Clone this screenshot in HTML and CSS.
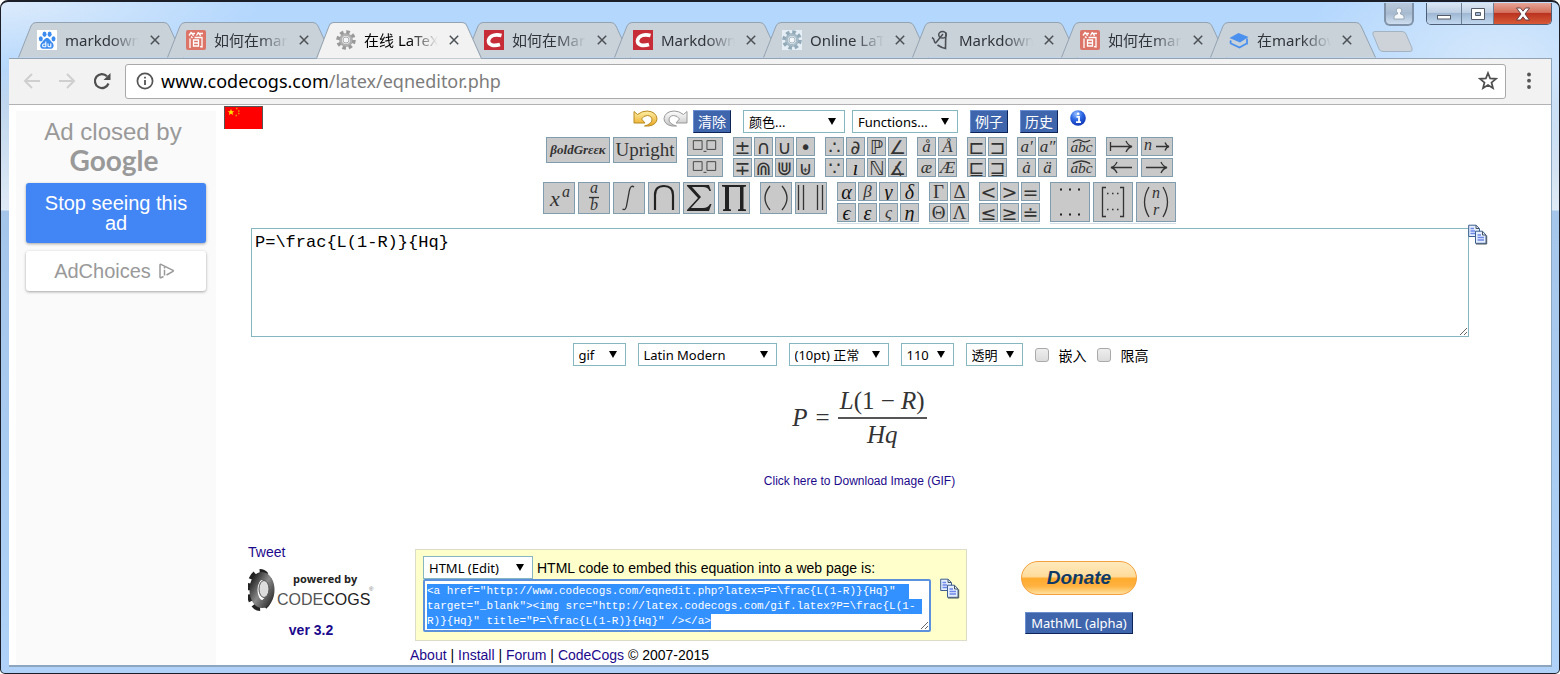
FILE: index.html
```html
<!DOCTYPE html>
<html lang="zh-CN">
<head>
<meta charset="utf-8">
<title>在线 LaTeX 公式编辑器</title>
<link rel="stylesheet" href="styles.css">
</head>
<body>
<svg class="defs" aria-hidden="true">
  <defs>
    <linearGradient id="gold" x1="0" y1="0" x2="0" y2="1"><stop offset="0" stop-color="#fff0a8"/><stop offset="1" stop-color="#e9a820"/></linearGradient>
    <linearGradient id="silver" x1="0" y1="0" x2="0" y2="1"><stop offset="0" stop-color="#ffffff"/><stop offset="1" stop-color="#c4c4c4"/></linearGradient>
    <radialGradient id="info" cx=".4" cy=".25" r=".8"><stop offset="0" stop-color="#9cc3ff"/><stop offset=".45" stop-color="#2f6be6"/><stop offset="1" stop-color="#0b2fae"/></radialGradient>
    <linearGradient id="metal" x1="0" y1="0" x2="1" y2="1"><stop offset="0" stop-color="#222"/><stop offset=".5" stop-color="#8a8a8a"/><stop offset="1" stop-color="#333"/></linearGradient>
    <symbol id="tab" viewBox="0 0 166 36" preserveAspectRatio="none"><path d="M.5 35.500 L13 4 Q14.500.500 18 .500 H146 Q149.500.500 151 4 L165.500 35.500"/></symbol>
    <symbol id="x" viewBox="0 0 10 10"><path d="M.8.8 9.200 9.200M9.200.8.8 9.200" stroke="#4c5155" stroke-width="1.500" fill="none"/></symbol>
    <symbol id="jian" viewBox="0 0 20 20"><rect width="20" height="20" rx="2" fill="#dd7468"/><path d="M5.500 2 3 5.500M4.500 3.500H9M6.500 4l1 2M12.500 2l-2 3.500M11.500 3.500H17M13.500 4l1 2M4 8.500V18M5 6.500l1.500 1.500M8.500 7.500H16V17l-2-.3M7.500 10h5v6h-5zM7.500 13h5" fill="none" stroke="#fff" stroke-width="1.300"/></symbol>
    <symbol id="csdn" viewBox="0 0 20 20"><rect width="20" height="20" fill="#c62d36"/><path d="M17.500 5.500C12 4 5.500 5 4.500 10.500 4 15 9.500 16.500 16 14.500" fill="none" stroke="#fff" stroke-width="3.600"/></symbol>
    <symbol id="cog" viewBox="0 0 20 20"><circle cx="10" cy="10" r="8" fill="none" stroke="currentColor" stroke-width="3.500" stroke-dasharray="3.500 2.783"/><circle cx="10" cy="10" r="5.500" fill="none" stroke="currentColor" stroke-width="3" opacity=".75"/><circle cx="10" cy="10" r="3" fill="#f4f6f7" stroke="currentColor" stroke-width=".8"/></symbol>
    <symbol id="copy" viewBox="0 0 20 20"><g stroke="#3d5f8f" fill="#e5efff"><path d="M.7.700H8L11.500 4V12H.7z"/><path d="M7.500 6.700H14.500L18 10.500V18.800H7.500z"/></g><path d="M18.700 11V19.500H8M14.500 7v3.500H18M8 1v3h3" fill="none" stroke="#46535f"/><path d="M2.500 4H6M2.500 6.500H7M2.500 9H7M9.500 10.500H13M9.500 13H16M9.500 15.500H16" stroke="#6d87e8" stroke-width="1.300"/></symbol>
    <symbol id="boxes" viewBox="0 0 35 17"><path d="M5.500 2.500h9v9h-9zM19.500 2.500h9v9h-9zM16 13.500h3" fill="none" stroke="#444"/></symbol>
  </defs>
</svg>

<div class="window">
  <header class="titlebar">
    <nav class="tabs" aria-label="标签页">
      <div class="tab"><svg class="shape"><use href="#tab"/></svg>
        <svg class="fav" viewBox="0 0 20 20"><rect width="20" height="20" fill="#fff"/><g fill="#3c8cf0"><ellipse cx="3.800" cy="8.800" rx="2" ry="2.600"/><ellipse cx="7.500" cy="4.200" rx="2" ry="2.700"/><ellipse cx="12.600" cy="4.200" rx="2" ry="2.700"/><ellipse cx="16.500" cy="8.800" rx="2" ry="2.600"/><path d="M10 8c2.500 0 3 2.500 5 4.200 3 2.600 1.500 6.600-1.500 6.600h-7c-3.300 0-4.600-4-1.500-6.600C7 10.500 7.500 8 10 8z"/></g><path d="M8.800 11.500v5.300M8.800 14h-2q-1.200 0-1.200 1.400t1.200 1.400h2M11 13.500v2.200q0 1.100 1.200 1.100h1.600v-3.300" fill="none" stroke="#fff" stroke-width="1.100"/></svg>
        <span class="title">markdown</span><button class="close" aria-label="关闭"><svg><use href="#x"/></svg></button></div>
      <div class="tab"><svg class="shape"><use href="#tab"/></svg><svg class="fav"><use href="#jian"/></svg><span class="title">如何在markdown</span><button class="close" aria-label="关闭"><svg><use href="#x"/></svg></button></div>
      <div class="tab active"><svg class="shape"><use href="#tab"/></svg><svg class="fav gray"><use href="#cog"/></svg><span class="title">在线 LaTeX</span><button class="close" aria-label="关闭"><svg><use href="#x"/></svg></button></div>
      <div class="tab"><svg class="shape"><use href="#tab"/></svg><svg class="fav"><use href="#csdn"/></svg><span class="title">如何在Markdown</span><button class="close" aria-label="关闭"><svg><use href="#x"/></svg></button></div>
      <div class="tab"><svg class="shape"><use href="#tab"/></svg><svg class="fav"><use href="#csdn"/></svg><span class="title">Markdown</span><button class="close" aria-label="关闭"><svg><use href="#x"/></svg></button></div>
      <div class="tab"><svg class="shape"><use href="#tab"/></svg><svg class="fav steel"><use href="#cog"/></svg><span class="title">Online LaTeX</span><button class="close" aria-label="关闭"><svg><use href="#x"/></svg></button></div>
      <div class="tab"><svg class="shape"><use href="#tab"/></svg>
        <svg class="fav" viewBox="0 0 20 20"><path d="M1 7.500q2 1 2.500 4 .5 2.500 2 .5L12 4" fill="none" stroke="#4b5055" stroke-width="1.500"/><ellipse cx="11.500" cy="4.800" rx="3.800" ry="3.300" fill="none" stroke="#4b5055" stroke-width="1.500"/><path d="M15 2.500q-.5 8-.5 16-3.500-.5-8-3.500" fill="none" stroke="#4b5055" stroke-width="1.600"/></svg>
        <span class="title">Markdown</span><button class="close" aria-label="关闭"><svg><use href="#x"/></svg></button></div>
      <div class="tab"><svg class="shape"><use href="#tab"/></svg><svg class="fav"><use href="#jian"/></svg><span class="title">如何在markdown</span><button class="close" aria-label="关闭"><svg><use href="#x"/></svg></button></div>
      <div class="tab"><svg class="shape"><use href="#tab"/></svg>
        <svg class="fav" viewBox="0 0 20 20"><path d="M.5 8 9.500 3 19.500 7 11 12.500z" fill="#4a90ee"/><path d="M2 10.500q-1 2 0 3l8.500 4 8-4.500M18 8.500v6" fill="none" stroke="#4a90ee" stroke-width="1.800"/></svg>
        <span class="title">在markdown</span><button class="close" aria-label="关闭"><svg><use href="#x"/></svg></button></div>
      <button class="newtab" aria-label="新标签页"><svg viewBox="0 0 42 21"><path d="M3 .5H30Q33 .5 34 3L40 17Q41 20.500 38 20.500H11Q8 20.500 7 18L1 3.500Q0 .5 3 .5z" fill="#cdd3d9" stroke="#a3b3c2"/></svg></button>
    </nav>
    <button class="user" aria-label="用户"><svg viewBox="0 0 12 13"><path d="M6 1a2.600 2.600 0 0 1 1.500 4.800V7Q11 7.500 11 10v2H1v-2q0-2.500 3.500-3V5.800A2.600 2.600 0 0 1 6 1z" fill="#f6f9fc" stroke="#8b9aa8" stroke-width=".8"/></svg></button>
    <div class="controls">
      <button class="ctl min" aria-label="最小化"><svg viewBox="0 0 18 14"><rect x="2.500" y="8.500" width="13" height="3.500" fill="#fff" stroke="#525b66"/></svg></button>
      <button class="ctl max" aria-label="最大化"><svg viewBox="0 0 18 14"><path d="M2.500 1.500h13v11h-13zM6.500 5.500h5v3h-5z" fill="#fff" fill-rule="evenodd" stroke="#525b66"/></svg></button>
      <button class="ctl quit" aria-label="关闭窗口"><svg viewBox="0 0 18 14"><path d="M2.500 1h4L9 4.200 11.500 1h4L11 7l4.500 6h-4L9 9.800 6.500 13h-4L7 7z" fill="#fff" stroke="#5a3a44" stroke-width=".9"/></svg></button>
    </div>
  </header>

  <div class="client">
    <div class="toolbar">
      <button class="nav off" aria-label="后退"><svg viewBox="0 0 18 18"><path d="M17 9H2M9 2 2 9l7 7"/></svg></button>
      <button class="nav off" aria-label="前进"><svg viewBox="0 0 18 18"><path d="M1 9h15M9 2l7 7-7 7"/></svg></button>
      <button class="nav reload" aria-label="刷新"><svg viewBox="0 0 18 18"><path d="M15.500 11.500A7 7 0 1 1 14 4.200" stroke-width="2.200"/><path d="M17.500 1v7h-7z" fill="#4f4f4f" stroke="none"/></svg></button>
      <div class="omnibox">
        <svg class="site" viewBox="0 0 18 18"><circle cx="9" cy="9" r="7.600" fill="none" stroke="#555" stroke-width="1.700"/><path d="M9 8v5M9 4.800v1.800" stroke="#555" stroke-width="1.800"/></svg>
        <div class="url" role="textbox" aria-label="地址">www.codecogs.com<span>/latex/eqneditor.php</span></div>
        <svg class="star" viewBox="0 0 20 20"><path d="M10 2l2.100 5.400 5.900.4-4.500 3.700 1.500 5.700-5-3.200-5 3.200 1.500-5.700L2 7.800l5.900-.4z" fill="none" stroke="#4f4f4f" stroke-width="1.700"/></svg>
      </div>
      <button class="menu" aria-label="菜单"><svg viewBox="0 0 6 18"><g fill="#555"><circle cx="3" cy="2.500" r="1.900"/><circle cx="3" cy="8.700" r="1.900"/><circle cx="3" cy="15" r="1.900"/></g></svg></button>
    </div>

    <div class="page">
      <aside class="ad">
        <p class="closed">Ad closed by</p>
        <p class="google">Google</p>
        <button class="stop">Stop seeing this ad</button>
        <button class="choices">AdChoices <svg viewBox="0 0 16 16"><path d="M4.500 13.500l-2.500 1.200q-1 .3-1-.7V2q0-1 1-.6L14 7.300q.8.500 0 1L7.500 12M5.500 6.800v5.700M5.500 4v1.600" fill="none" stroke="#999" stroke-width="1.500"/></svg></button>
      </aside>

      <main class="editor">
        <div class="top">
          <svg class="flag" viewBox="0 0 39 23"><path d="M0 0h39v23H0z" fill="#fe0000"/><path d="M.5 23V.5h38V23" fill="none" stroke="#555"/><path d="M7 3l1 2.200 2.300.1-1.800 1.500.7 2.200L7 7.700 4.800 9l.7-2.200-1.800-1.500L6 5.200z" fill="#fd0"/><path d="M12 2.500h1.500M14 5h1.500M14 7.500h1.500M11.500 9.500H13" stroke="#e8920a" stroke-width="1.300"/></svg>
          <div class="actions">
            <button class="plain" aria-label="撤销"><svg viewBox="0 0 25 17"><path d="M1 1.500 4.500 4.500Q9 1 14 1q9 .5 10 7.500 0 6-8 7.500h-4.500q7-2 7.500-6 0-4-4.500-4.500-4 0-6 3.500l3.500 4H1z" fill="url(#gold)" stroke="#b98a1e"/></svg></button>
            <button class="plain" aria-label="重做"><svg viewBox="0 0 25 17"><path d="M24 1.500 20.500 4.500Q16 1 11 1 2 1.500 1 8.500 1 14.500 9 16h4.500Q6.500 14 6 10q0-4 4.500-4.500 4 0 6 3.500L13 13H24z" fill="url(#silver)" stroke="#999"/></svg></button>
            <button class="blue">清除</button>
            <select class="colour" aria-label="颜色"><option>颜色...</option></select>
            <select class="functions" aria-label="Functions"><option>Functions...</option></select>
            <button class="blue">例子</button>
            <button class="blue">历史</button>
            <button class="plain info" aria-label="帮助"><svg viewBox="0 0 16 16"><circle cx="8" cy="8" r="7.800" fill="url(#info)"/><path d="M6.500 6.800H9v5M6 12.200h5" fill="none" stroke="#fff" stroke-width="1.800"/><circle cx="8.200" cy="3.800" r="1.300" fill="#fff"/></svg></button>
          </div>
        </div>

        <div class="panels">
          <div class="group two"><button class="key wide greek">βoldGrεεκ</button><button class="key wide">Upright</button></div>
          <div class="group one"><button class="key mid"><svg><use href="#boxes"/></svg></button><button class="key mid"><svg><use href="#boxes"/></svg></button></div>
          <div class="group four sym"><button class="key">±</button><button class="key">∩</button><button class="key">∪</button><button class="key">•</button><button class="key">∓</button><button class="key">⋒</button><button class="key">⋓</button><button class="key">⊎</button></div>
          <div class="group four sym"><button class="key">∴</button><button class="key it">∂</button><button class="key">ℙ</button><button class="key">∠</button><button class="key">∵</button><button class="key gk">ı</button><button class="key">ℕ</button><button class="key">∡</button></div>
          <div class="group two"><button class="key it">å</button><button class="key it">Å</button><button class="key it">æ</button><button class="key it">Æ</button></div>
          <div class="group two sym"><button class="key">⊏</button><button class="key">⊐</button><button class="key">⊑</button><button class="key">⊒</button></div>
          <div class="group two"><button class="key it">a′</button><button class="key it">a″</button><button class="key it">ȧ</button><button class="key it">ä</button></div>
          <div class="group one"><button class="key abc"><svg viewBox="0 0 28 17"><path d="M5 4q5-4 9-1.500T23 2" class="line"/><text x="14" y="14">abc</text></svg></button><button class="key abc"><svg viewBox="0 0 28 17"><path d="M5 4.500Q14-1 23 4.500" class="line"/><text x="14" y="14">abc</text></svg></button></div>
          <div class="group two">
            <button class="key arrow"><svg viewBox="0 0 30 17"><path d="M3.500 4v9M4 8.500H25M19 3q2 4.500 6 5.500-4 1-6 5.500" class="line"/></svg></button>
            <button class="key arrow"><svg viewBox="0 0 30 17"><text x="6" y="12">n</text><path d="M14 8.500h13M23 4.500q1.500 3.500 4 4-2.500.5-4 4" class="line"/></svg></button>
            <button class="key arrow"><svg viewBox="0 0 30 17"><path d="M4 8.500H25M10 3Q8 7.500 4 8.500q4 1 6 5.500" class="line"/></svg></button>
            <button class="key arrow"><svg viewBox="0 0 30 17"><path d="M4 8.500H25M19 3q2 4.500 6 5.500-4 1-6 5.500" class="line"/></svg></button>
          </div>
        </div>

        <div class="panels last">
          <div class="group six">
            <button class="key big"><svg viewBox="0 0 30 30"><text x="11" y="23" class="t22">x</text><text x="22" y="14">a</text></svg></button>
            <button class="key big"><svg viewBox="0 0 30 30"><text x="15" y="10">a</text><path d="M10 14.500h10" class="line"/><text x="15" y="27">b</text></svg></button>
            <button class="key big"><svg viewBox="0 0 30 30"><path d="M20 4q-3-2.500-4.500 3l-3 16q-1 5-4 3" class="line"/></svg></button>
            <button class="key big"><svg viewBox="0 0 30 30"><path d="M6 27V12Q6 3 15 3t9 9v15" class="heavy"/></svg></button>
            <button class="key big"><svg viewBox="0 0 30 30"><path d="M3 2h22l2 6h-1.500Q24 4 19 4H8l9 10L7 25h12q5 0 7-4h1.500l-2.500 7H3v-1l11-12L3 3z" fill="#222"/></svg></button>
            <button class="key big"><svg viewBox="0 0 30 30"><path d="M3 2h24v1.500l-2.500.5v22l2.500.5V28h-8v-1.500l2-.5V4H10v22l2 .5V28H4v-1.500l2-.5V4l-3-.5z" fill="#222"/></svg></button>
          </div>
          <div class="group two">
            <button class="key big"><svg viewBox="0 0 30 30"><path d="M9 3q-10 12 0 24M21 3q10 12 0 24" class="line"/></svg></button>
            <button class="key big"><svg viewBox="0 0 30 30"><path d="M2.500 2v25M7.500 2v25M21.500 2v25M26.500 2v25" class="line"/></svg></button>
          </div>
          <div class="group four peek"><button class="key gk">α</button><button class="key it">β</button><button class="key gk">γ</button><button class="key gk">δ</button><button class="key gk">ϵ</button><button class="key gk">ε</button><button class="key it">ς</button><button class="key gk">η</button></div>
          <div class="group two peek up"><button class="key">Γ</button><button class="key">Δ</button><button class="key">Θ</button><button class="key">Λ</button></div>
          <div class="group three peek sym"><button class="key">&lt;</button><button class="key">&gt;</button><button class="key">=</button><button class="key">≤</button><button class="key">≥</button><button class="key">≐</button></div>
          <div class="group three peek">
            <button class="key huge"><svg viewBox="0 0 38 38"><path d="M9 6.500h2M18 6.500h2M27 6.500h2M9 31.500h2M18 31.500h2M27 31.500h2" stroke="#222" stroke-width="2"/></svg></button>
            <button class="key huge"><svg viewBox="0 0 38 38"><path d="M12 4.500H8.500v29H12M26 4.500h3.500v29H26M13 10.500h1.500M18 10.500h1.500M23 10.500h1.500M13 26.500h1.500M18 26.500h1.500M23 26.500h1.500" class="line"/></svg></button>
            <button class="key huge"><svg viewBox="0 0 38 38"><path d="M12 4Q3 19 12 34M26 4q9 15 0 30" class="line"/><text x="19" y="15">n</text><text x="19" y="32">r</text></svg></button>
          </div>
        </div>

        <div class="source">
          <textarea class="latex" aria-label="LaTeX" spellcheck="false">P=\frac{L(1-R)}{Hq}</textarea>
          <button class="plain copy" aria-label="复制"><svg><use href="#copy"/></svg></button>
        </div>

        <div class="options">
          <select class="w53" aria-label="格式"><option>gif</option></select>
          <select class="w139" aria-label="字体"><option>Latin Modern</option></select>
          <select class="w100" aria-label="字号"><option>(10pt) 正常</option></select>
          <select class="w53" aria-label="分辨率"><option>110</option></select>
          <select class="w57" aria-label="背景"><option>透明</option></select>
          <label><input type="checkbox">嵌入</label>
          <label><input type="checkbox">限高</label>
        </div>

        <div class="equation" role="img" aria-label="P = L(1-R)/Hq">
          <i>P</i><span>=</span>
          <span class="frac"><span class="num"><i>L</i>(1 − <i>R</i>)</span><span class="den"><i>Hq</i></span></span>
        </div>
        <a class="download" href="#">Click here to Download Image (GIF)</a>

        <footer class="bottom">
          <div class="brand">
            <a href="#">Tweet</a>
            <svg class="logo" viewBox="0 0 128 46">
              <ellipse cx="12" cy="22" rx="9.500" ry="17" fill="none" stroke="#222" stroke-width="8" stroke-dasharray="6.500 4"/>
              <ellipse cx="14" cy="22" rx="8.500" ry="14" fill="none" stroke="url(#metal)" stroke-width="8"/>
              <ellipse cx="16" cy="21" rx="5" ry="8.500" fill="#ddd" stroke="#555"/>
              <text x="45" y="15" class="pow">powered by</text>
              <text x="29" y="37" class="cogs"><tspan fill="#555">CODE</tspan><tspan>COGS</tspan></text>
              <text x="121" y="23" class="reg">®</text>
            </svg>
            <a class="ver" href="#">ver 3.2</a>
          </div>
          <div class="middle">
            <div class="embed">
              <div class="code">
                <div class="line1"><select id="kind" class="w110" aria-label="代码类型"><option>HTML (Edit)</option></select><label for="code">HTML code to embed this equation into a web page is:</label></div>
                <textarea id="code" spellcheck="false">&lt;a href="http://www.codecogs.com/eqnedit.php?latex=P=\frac{L(1-R)}{Hq}" target="_blank"&gt;&lt;img src="http://latex.codecogs.com/gif.latex?P=\frac{L(1-R)}{Hq}" title="P=\frac{L(1-R)}{Hq}" /&gt;&lt;/a&gt;</textarea>
              </div>
              <button class="plain copy" aria-label="复制代码"><svg><use href="#copy"/></svg></button>
            </div>
            <p class="links"><a href="#">About</a> | <a href="#">Install</a> | <a href="#">Forum</a> | <a href="#">CodeCogs</a> © 2007-2015</p>
          </div>
          <div class="right">
            <button class="donate">Donate</button>
            <button class="blue mathml">MathML (alpha)</button>
          </div>
        </footer>
      </main>
    </div>
  </div>
</div>
<script src="main.js"></script>
</body>
</html>
```
FILE: main.js
```js
// The embed code is focused and selected on load, ready to be copied.
const code = document.getElementById("code");
code.focus({ preventScroll: true });
code.select();
```
FILE: styles.css
```css
* { box-sizing: border-box; }
body {
  margin: 0;
  background: #fff;
  color: #000;
  font-family: "Liberation Sans", "Noto Sans CJK SC", sans-serif;
  font-size: 14px;
}
p { margin: 0; }
button { margin: 0; padding: 0; border: 0; background: none; font-family: inherit; color: inherit; }
button svg { display: block; }
a { color: #1c0a8c; text-decoration: none; }
.defs { position: absolute; width: 0; height: 0; }

.window {
  display: flex;
  flex-direction: column;
  min-height: 100vh;
  padding: 1px 7px 6px 8px;
  border: 1px solid #1b1e26;
  border-top-width: 2px;
  border-radius: 8px 8px 5px 5px;
  background:
    radial-gradient(ellipse 260px 70px at 0 0, #dcebfb, transparent),
    radial-gradient(ellipse 200px 120px at 96% 60px, #d5e8fb, transparent),
    linear-gradient(#b4d7fd 0, #b4d7fd 60px, #c0d6ee 100px, #dfeaf5 208px, #a5c5ea 209px, #b0d2f8 100%);
}

/* Title bar */
.titlebar { display: flex; height: 55px; }
.tabs { display: flex; align-items: flex-end; flex: 1; min-width: 0; padding-left: 9px; }
.tab {
  position: relative;
  display: flex;
  align-items: center;
  flex: none;
  width: 166px;
  height: 36px;
  margin-right: -17px;
  padding: 0 19px;
}
.tab .shape { position: absolute; inset: 0; width: 100%; height: 100%; fill: #c9d1d9; stroke: #94a3b1; }
.tab.active { z-index: 1; margin-bottom: -1px; height: 37px; padding-left: 20px; padding-bottom: 1px; }
.tab.active .shape { fill: #f2f2f2; }
.fav { position: relative; flex: none; width: 20px; height: 20px; }
.gray { color: #999; }
.steel { color: #91a9b8; background: #e5eef4; }
.title {
  position: relative;
  width: 74px;
  margin-left: 8px;
  overflow: hidden;
  white-space: nowrap;
  font-family: "Noto Sans", "Noto Sans CJK SC", sans-serif;
  font-size: 15px;
  line-height: 24px;
  color: #30353a;
  -webkit-mask-image: linear-gradient(90deg, #000 60%, transparent);
  mask-image: linear-gradient(90deg, #000 60%, transparent);
}
.active .title { color: #000; }
.close { position: relative; margin-left: 11px; }
.close svg { width: 10px; height: 10px; }
.newtab { flex: none; margin: 0 0 6px 13px; }
.newtab svg { width: 42px; height: 21px; }
.user {
  position: relative;
  display: grid;
  place-items: center;
  flex: none;
  width: 30px;
  height: 23px;
  margin-right: 12px;
  border: 2px solid #8093a8;
  border-top: 0;
  border-radius: 0 0 6px 6px;
  background: linear-gradient(#b9c9da, #a6bad0 50%, #cfdef0);
}
.user svg { width: 12px; height: 13px; }
.controls { display: flex; flex: none; height: 22px; border: 1px solid #4d5f76; border-top: 0; border-radius: 0 0 5px 5px; overflow: hidden; }
.ctl { display: grid; place-items: center; width: 35px; border-right: 1px solid #6d8096; background: linear-gradient(#dbe7f4, #bfd0e4 45%, #9fb7d2 50%, #c2d8f0); }
.ctl.max { width: 32px; }
.ctl.quit { width: 57px; border: 0; background: linear-gradient(#e5a597, #d3705c 45%, #bb3320 50%, #d75a37); }
.ctl svg { width: 18px; height: 14px; }

/* Browser toolbar */
.client { display: flex; flex-direction: column; flex: 1; border: 1px solid #8ca6c0; border-width: 0 1px 2px 0; background: #fff; }
.toolbar { display: flex; align-items: center; height: 47px; padding: 0 19px 1px 14px; border-top: 1px solid #94a3b1; border-bottom: 1px solid #b3b1b3; background: #f2f2f2; }
.nav { margin-right: 17px; }
.nav svg { width: 18px; height: 18px; fill: none; stroke: #4f4f4f; stroke-width: 2; }
.nav.off svg { stroke: #cfcfcf; }
.nav.reload { margin-right: 14px; }
.omnibox { display: flex; align-items: center; flex: 1; height: 35px; padding: 0 7px 0 10px; border: 1px solid #a9a9a9; border-radius: 3px; background: #fff; }
.site { width: 18px; height: 18px; }
.url { flex: 1; margin-left: 7px; font: 18px/24px "Noto Sans", "Open Sans", sans-serif; color: #000; }
.url span { color: #7c7c7c; }
.star { width: 20px; height: 20px; }
.menu { margin-left: 20px; }
.menu svg { width: 6px; height: 18px; }

/* Page */
.page { display: flex; flex: 1; padding: 1px 0 0 7px; }
.ad { width: 200px; margin-top: 5px; padding: 7px 10px; background: #fafafa; text-align: center; color: #999; }
.closed { font-size: 24px; line-height: 28px; padding-right: 6px; }
.google { font: 700 28px/28px Lato, sans-serif; color: #999; padding-right: 4px; margin-bottom: 9px; }
.stop, .choices { width: 100%; border-radius: 3px; box-shadow: 0 1px 3px rgba(0, 0, 0, .35); font-size: 20px; line-height: 20px; }
.stop { padding: 10px 16px; background: #4285f4; color: #fff; }
.choices { display: flex; align-items: center; justify-content: center; gap: 8px; height: 40px; margin-top: 8px; padding-right: 3px; background: #fff; }
.choices svg { width: 16px; height: 16px; }

.editor { flex: 1; padding: 0 56px 0 8px; }
.top { display: grid; grid-template-columns: 1fr auto 1fr; }
.flag { width: 39px; height: 23px; }
.actions { display: flex; align-items: flex-start; padding-top: 4px; height: 31px; }
.plain svg { width: 25px; height: 17px; }
.actions .plain { margin-right: 5px; }
.blue {
  height: 23px;
  padding: 0 4px;
  border: 1px solid;
  border-color: #6a8fd0 #0c2458 #0c2458 #6a8fd0;
  background: #3f66ad;
  color: #fff;
  font: 14px/20px "Noto Sans", "Noto Sans CJK SC", sans-serif;
}
.actions .blue { margin-right: 12px; }
.actions .info { margin: 0; }
.info svg { width: 16px; height: 16px; }
select {
  appearance: none;
  height: 23px;
  padding: 0 18px 0 5px;
  border: 1px solid #86b6bf;
  border-radius: 0;
  background: #fff url("data:image/svg+xml,%3Csvg xmlns='http://www.w3.org/2000/svg' width='8' height='7'%3E%3Cpath d='M0 0h8L4 7z'/%3E%3C/svg%3E") no-repeat right 8px center;
  color: #000;
  font: 13px/20px "Noto Sans", "Noto Sans CJK SC", sans-serif;
}
.colour { width: 102px; margin-right: 7px; }
.functions { width: 106px; margin-right: 12px; }

/* Symbol panels */
.panels { display: flex; justify-content: center; align-items: flex-start; gap: 10px; height: 45px; }
.panels.last { height: 46px; }
.group { display: grid; gap: 2px; }
.two { grid-template-columns: repeat(2, auto); }
.three { grid-template-columns: repeat(3, auto); }
.four { grid-template-columns: repeat(4, auto); }
.six { grid-template-columns: repeat(6, auto); }
.key {
  display: grid;
  place-items: center;
  width: 19px;
  height: 19px;
  border: 1px solid #809db0;
  background: #c9c9c9;
  color: #333;
  font: 17px/16px "Liberation Serif", "DejaVu Serif", serif;
  overflow: hidden;
}
.sym .key { font: 19px/16px "DejaVu Sans", sans-serif; }
.group .it { font-style: italic; }
.group .gk { font: italic 20px/16px "Liberation Serif", "DejaVu Serif", serif; color: #111; }
.up .key { font-size: 19px; }
.group .wide { width: 64px; height: 26px; font-size: 19px; line-height: 22px; }
.group .greek { font: italic 700 13px/22px "Liberation Serif", serif; }
.mid { width: 36px; }
.mid svg { width: 34px; height: 17px; }
.abc { width: 29px; }
.abc svg { width: 27px; height: 17px; }
.arrow { width: 32px; }
.arrow svg { width: 30px; height: 17px; }
.big { width: 32px; height: 32px; }
.big svg { width: 30px; height: 30px; }
.huge { width: 40px; height: 40px; }
.huge svg { width: 38px; height: 38px; }
.group:has(.big, .huge, .wide, .arrow) { column-gap: 3px; }
.peek { padding-bottom: 1px; border-bottom: 1px solid #d3dee6; }
.line { fill: none; stroke: #333; stroke-width: 1.3; }
.heavy { fill: none; stroke: #222; stroke-width: 2.2; }
.key text { fill: #333; font: italic 16px "Liberation Serif", serif; text-anchor: middle; }
.key .t22 { font-size: 22px; }

/* LaTeX source */
.source { display: flex; align-items: flex-start; padding-left: 27px; margin-right: -1px; }
.latex {
  flex: 1;
  height: 109px;
  margin: 0;
  padding: 2px 3px;
  border: 1px solid #86b6bf;
  outline: 0;
  font: 17px/24px "Liberation Mono", monospace;
}
.source .copy { width: 28px; margin: -4px 0 0 -1px; }
.copy svg { width: 20px; height: 21px; }

.options { display: flex; justify-content: center; align-items: center; gap: 12px; margin-top: 6px; }
.options label { display: flex; align-items: center; margin-right: -2px; }
.options input { width: 14px; height: 14px; margin: 0 10px 0 0; appearance: none; border: 1px solid #a9a9a9; border-radius: 3px; background: linear-gradient(#eee, #dcdcdc); }
.w53 { width: 53px; }
.w57 { width: 57px; }
.w100 { width: 100px; }
.w110 { width: 110px; }
.w139 { width: 139px; }

.equation { display: flex; justify-content: center; align-items: center; gap: 8px; height: 62px; margin-top: 21px; font: 25px/28px "Liberation Serif", serif; color: #333; }
.frac { display: grid; text-align: center; }
.num { padding: 0 2px 2px; border-bottom: 2px solid #555; }
.den { padding-top: 2px; }
.download { display: block; margin-top: 24px; text-align: center; font-size: 12px; line-height: 16px; }

/* Footer */
.bottom { display: flex; margin-top: 55px; padding-left: 24px; }
.brand { display: flex; flex-direction: column; width: 162px; line-height: 16px; }
.logo { width: 128px; height: 46px; margin-top: 8px; }
.pow { font: 700 11px "Open Sans", sans-serif; fill: #222; }
.cogs { font: 16px "Liberation Sans", sans-serif; fill: #222; }
.reg { font-size: 6px; fill: #777; }
.ver { width: 126px; margin-top: 8px; text-align: center; font-weight: 700; }
.middle { margin-top: 5px; }
.embed { display: flex; gap: 9px; width: 552px; margin-left: 5px; padding: 6px 6px 8px 7px; border: 1px solid #dcdcc8; background: #ffffcc; }
.code { width: 508px; }
.line1 { display: flex; align-items: center; gap: 4px; height: 23px; }
.embed .copy { align-self: flex-start; margin-top: 22px; }
#code {
  display: block;
  width: 100%;
  height: 53px;
  margin: 0;
  padding: 3px 2px;
  border: 2px solid #5c92dc;
  border-radius: 2px;
  outline: 0;
  overflow: hidden;
  font: 11px/15px "Liberation Mono", monospace;
}
#code::selection { background: #3390ff; color: #fff; }
.links { margin-top: 6px; line-height: 16px; }
.right { display: flex; flex-direction: column; align-items: center; margin: 17px 0 0 54px; }
.donate {
  width: 116px;
  height: 34px;
  border: 1px solid #f5a03c;
  border-radius: 17px;
  background: linear-gradient(#ffe9bd, #ffdc9c 45%, #ffab2e 52%, #ffb240 75%, #ffe0a0);
  color: #0f3a66;
  font: italic 700 19px/30px "Liberation Sans", sans-serif;
}
.mathml { margin-top: 17px; height: 22px; padding: 0 5px; font-size: 13px; line-height: 18px; }
```
